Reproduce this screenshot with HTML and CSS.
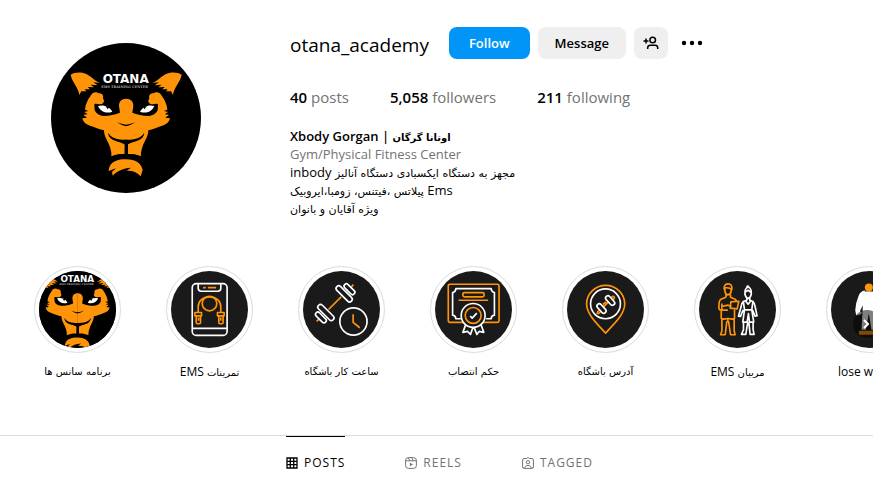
FILE: index.html
```html
<!DOCTYPE html>
<html lang="en">
<head>
<meta charset="utf-8">
<meta name="viewport" content="width=device-width, initial-scale=1">
<title>otana_academy</title>
<link rel="stylesheet" href="styles.css">
</head>
<body>
<svg class="defs" aria-hidden="true">
  <defs>
    <g id="ear"><path d="M92 119C103 111 124 111 137 116C155 124 160 135 180 144L160 142L173 151L152 149L162 157L143 156L150 163L134 163L139 169L124 169L118 180C116 158 96 142 92 119Z"/></g>
    <g id="half">
      <path d="M259 191C244 191 237 200 237 213L240 233C226 238 210 243 190 243C176 241 168 235 164 226L163 208C170 204 175 210 185 207C194 202 193 194 189 191C192 181 185 174 176 175C168 168 155 173 151 184C142 196 136 210 135 224L145 228L133 231L143 238L130 239L141 248L127 250C130 263 139 269 153 273C168 278 178 283 192 286C192 306 204 318 209 334C213 345 215 354 214 364C228 357 241 356 254 357L255 330C250 320 230 320 216 313C208 308 206 301 204 293C212 309 232 314 259 314Z"/>
      <path d="M254 314H259V322H254Z" fill="#000"/>
      <path d="M174 213C190 208 208 213 217 230C201 237 182 231 174 213Z" fill="#fff"/>
      <path d="M196 212L208 216L203 223Z" fill="#000"/>
    </g>
    <g id="tiger">
      <rect x="33" y="24" width="450" height="450" fill="#000"/>
      <g fill="#ff9408">
        <use href="#ear"/><use href="#ear" transform="matrix(-1 0 0 1 517 0)"/>
        <use href="#half"/><use href="#half" transform="matrix(-1 0 0 1 517 0)"/>
        <path d="M206 408C207 386 224 374 250 373C281 370 304 382 308 405L302 424C292 412 279 406 260 407L273 398C249 400 232 407 218 422L216 411L228 400C219 402 212 407 206 408Z"/>
      </g>
      <path d="M231 262Q246 272 258 274Q271 272 286 262Q271 268 258 269Q246 268 231 262Z" fill="#000"/>
      <path d="M205 294C213 313 239 317 258 317C278 317 304 313 312 294C309 319 281 318 264 328V356H254V328C236 318 208 319 205 294Z" fill="#000"/>
      <text x="257" y="144" class="logo-name">OTANA</text>
      <text x="254" y="159" class="logo-sub">EMS TRAINING CENTER</text>
    </g>
  </defs>
</svg>

<main>
  <header class="profile">
    <svg class="avatar" viewBox="33 24 450 450" role="img" aria-label="otana_academy"><use href="#tiger"/></svg>
    <section class="info">
      <div class="top">
        <h1>otana_academy</h1>
        <div class="actions">
          <button class="btn primary">Follow</button>
          <button class="btn">Message</button>
          <button class="btn square" aria-label="Similar accounts">
            <svg width="16" height="16" viewBox="0 0 16 16" fill="none" stroke="#000" stroke-width="1.5"><circle cx="9.700" cy="5" r="2.800"/><path d="M4.700 14v-1.200c0-1.600 1-2.600 2.600-2.600h4.800c1.600 0 2.600 1 2.600 2.600V14M.5 6h5M3 3.500v5"/></svg>
          </button>
          <button class="more" aria-label="Options"><svg width="22" height="6" viewBox="0 0 22 6"><circle cx="3" cy="3" r="2.200"/><circle cx="11" cy="3" r="2.200"/><circle cx="19" cy="3" r="2.200"/></svg></button>
        </div>
      </div>
      <ul class="stats">
        <li><b>40</b> posts</li>
        <li><b>5,058</b> followers</li>
        <li><b>211</b> following</li>
      </ul>
      <div class="bio">
        <p class="name">Xbody Gorgan | <span lang="fa">اوتانا گرگان</span></p>
        <p class="category">Gym/Physical Fitness Center</p>
        <p dir="rtl"><span lang="fa">مجهز به دستگاه ایکسبادی دستگاه آنالیز</span> inbody</p>
        <p dir="rtl">Ems <span lang="fa">پیلاتس ،فیتنس، زومبا،ایروبیک</span></p>
        <p dir="rtl"><span lang="fa">ویژه آقایان و بانوان</span></p>
      </div>
    </section>
  </header>

  <section class="carousel">
    <ul class="highlights">
      <li><a href="#"><svg viewBox="100 100 316 316"><use href="#tiger"/></svg><span dir="rtl" lang="fa">برنامه سانس ها</span></a></li>
      <li><a href="#"><svg viewBox="437 32 232 232" class="line">
        <g class="white"><rect x="501" y="70" width="105" height="156" rx="12"/><path d="M519 71v13q0 9 9 9h50q9 0 9-9V71M501 205h105"/></g>
        <g class="orange"><path d="M534 82h8m6 0h25"/><circle cx="553" cy="130" r="22"/><path d="M519 156v-16c0-18 14-30 34-30s34 12 34 30v16M509 157h20v10h-20zM577 157h20v10h-20zM513 167v20q0 4 4 4h5q4 0 4-4v-20M581 167v20q0 4 4 4h5q4 0 4-4v-20M520 172v10M587 172v10"/></g>
      </svg><span dir="rtl"><span lang="fa">تمرینات</span> EMS</span></a></li>
      <li><a href="#"><svg viewBox="38 32 232 232" class="line">
        <g class="orange"><path d="M115 148l38-38M182 82l8-9M79 184l8-8"/></g>
        <g class="white"><rect x="-31" y="-8" width="62" height="16" rx="8" transform="translate(162 101) rotate(45)"/><rect x="-20" y="-7" width="40" height="14" rx="7" transform="translate(178 87) rotate(45)"/><rect x="-31" y="-8" width="62" height="16" rx="8" transform="translate(107 157) rotate(45)"/><rect x="-20" y="-7" width="40" height="14" rx="7" transform="translate(92 172) rotate(45)"/><circle cx="190" cy="184" r="41"/></g>
        <path class="orange" d="M189 162v25l20 16"/>
      </svg><span dir="rtl" lang="fa">ساعت کار باشگاه</span></a></li>
      <li><a href="#"><svg viewBox="434 32 232 232" class="line">
        <rect class="orange" x="474" y="72" width="153" height="115" rx="5"/>
        <path class="white" d="M512 176h-15q-1-10-10-11V97q9-2 10-12h106q1 9 10 12v68q-9 1-10 11h-15"/>
        <g class="orange"><rect x="518" y="97" width="64" height="13" rx="5"/><path d="M505 120h89"/></g>
        <path class="white fill" d="M527 192l-9 25 14-3 9 9 9-26 10 26 7-9 14 3-9-25"/>
        <circle class="white fill" cx="549" cy="166" r="36"/>
        <circle class="orange" cx="549" cy="166" r="24"/><path class="white" d="M540 168l6 6 14-15"/>
      </svg><span dir="rtl" lang="fa">حکم انتصاب</span></a></li>
      <li><a href="#"><svg viewBox="50 32 232 232" class="line">
        <path class="orange" d="M166 219C137 187 109 161 109 131a57 55 0 0 1 115 0C224 161 196 187 166 219Z"/>
        <circle class="white" cx="166" cy="131" r="45"/>
        <path class="orange" d="M160 140l15-15M158 133l10-8M184 112q6-7 9 0 1 3-5 7M147 151q-6 3-6 8 6 3 9-4"/>
        <g class="white"><rect x="-17" y="-7" width="34" height="14" rx="7" transform="translate(180 121) rotate(48)"/><rect x="-17" y="-7" width="34" height="14" rx="7" transform="translate(154 145) rotate(48)"/></g>
      </svg><span dir="rtl" lang="fa">آدرس باشگاه</span></a></li>
      <li><a href="#"><svg viewBox="446 32 232 232" class="line">
        <g class="orange"><path d="M524 83v9q1 11 9 12 9-1 10-12v-9M522 89q-3-17 11-18 14-1 12 17-7-7-21-5M527 103v8l-15 6q-7 4-6 28 1 5 7 5h20M541 103v8l14 6 4 5M515 130v18M513 139l21-4 10 5M542 125l24-2-5 23-21-2zM513 150v25l8 2 12-2 13 2 7-2v-26M515 177v36l-4 11h14l5-41M552 177v36l3 11h-14l-6-41M533 175v10"/></g>
        <g class="white"><path d="M585 90q-3 20 9 25 12-5 9-25-4-9-9-9t-9 9ZM590 80q1-5 7-1M585 95l9-5 8 6M590 114v6l-11 4q-5 4-6 15l-8 29 6 1 8-20M599 114v6l10 4q4 4 6 15l6 28-6 1-8-19M580 126l3 23-5 37h13l4-26 3 26h13l-6-37 3-23M580 186v23l-6 14h13l6-37M609 186v23l3 14h-12l-4-37M582 149h24M587 123l7 9 7-9"/></g>
      </svg><span dir="rtl"><span lang="fa">مربیان</span> EMS</span></a></li>
      <li><a href="#"><svg viewBox="154 32 232 232">
        <circle cx="268" cy="82" r="12" fill="#ff9408"/>
        <path fill="#fff" d="M256 94h24q14 2 19 15l8 43-8 8-12-25 5 74h-16l-8-50-9 50h-13l4-74-9 18 6 4-3 5-14 4-3-16q2-25 10-43 5-14 19-16Z"/><path fill="#ff9408" d="M238 212h60v12h-60z"/>
      </svg><span>lose weight</span></a></li>
    </ul>
    <button class="next" aria-label="Next"><svg width="6" height="12" viewBox="0 0 6 12" fill="none" stroke="#fff" stroke-width="2"><path d="M1 2l4 4-4 4"/></svg></button>
  </section>

  <nav class="tabs">
    <a href="#" class="active"><svg width="12" height="12" viewBox="0 0 12 12" fill="none" stroke="currentColor" stroke-width="1.300"><path d="M1 1h10v10H1zM4.300 1v10M7.700 1v10M1 4.300h10M1 7.700h10"/></svg>POSTS</a>
    <a href="#"><svg width="12" height="12" viewBox="0 0 12 12" fill="none" stroke="currentColor" stroke-width="1"><rect x=".6" y=".6" width="10.800" height="10.800" rx="2.800"/><path d="M.6 3.800h10.800M3.300.8l1.600 3M6.700.8l1.600 3"/><path d="M4.900 5.700v3.600L8 7.500z" fill="currentColor" stroke="none"/></svg>REELS</a>
    <a href="#"><svg width="12" height="12" viewBox="0 0 12 12" fill="none" stroke="currentColor" stroke-width="1"><path d="M2 1.500h2.500L6 .5l1.500 1H10q1.400 0 1.400 1.400V10q0 1.400-1.400 1.400H2Q.6 11.400.6 10V2.900Q.6 1.500 2 1.500Z"/><circle cx="6" cy="5.200" r="1.700"/><path d="M2.800 11c0-3.400 6.400-3.400 6.400 0"/></svg>TAGGED</a>
  </nav>
</main>
</body>
</html>
```
FILE: styles.css
```css
* { box-sizing: border-box; }
body {
  margin: 0;
  background: #fff;
  color: #000;
  font: 14px/18px "Open Sans", "DejaVu Sans", sans-serif;
  overflow-x: hidden;
}
h1, p, ul { margin: 0; padding: 0; font-weight: 400; }
ul { list-style: none; }
a { color: inherit; text-decoration: none; }
button { border: 0; padding: 0; font: inherit; color: inherit; cursor: pointer; }
svg { display: block; flex: none; }
[lang="fa"] { font-family: "DejaVu Sans", sans-serif; font-size: 11px; }

.defs { position: absolute; width: 0; height: 0; }
.logo-name { font: 700 36px "DejaVu Sans", sans-serif; fill: #fff; text-anchor: middle; }
.logo-sub { font: 700 10px "DejaVu Serif", serif; fill: #aaa; text-anchor: middle; }

.profile { display: flex; gap: 89px; padding: 27px 24px 0 51px; }
.avatar { width: 150px; height: 150px; margin-top: 16px; border-radius: 50%; }
.info { flex: 1; min-width: 0; }
.top { display: flex; align-items: center; gap: 20px; height: 32px; }
h1 { padding-top: 4px; font-size: 19px; line-height: 32px; }
.actions { display: flex; align-items: center; gap: 8px; }
.btn {
  height: 32px;
  padding: 0 17px;
  border-radius: 8px;
  background: #efefef;
  font-size: 13px;
  font-weight: 600;
}
.primary { padding: 0 20px; background: #0095f6; color: #fff; }
.square { width: 34px; padding: 0 9px; }
.more { padding: 8px 5px; background: none; }

.stats { display: flex; gap: 41px; margin-top: 27px; font-size: 15px; line-height: 22px; color: #737373; }
.stats b { font-weight: 600; color: #000; }

.bio { margin-top: 19px; font-size: 13px; line-height: 18px; }
.bio p { height: 18px; text-align: left; }
.bio .name { font-weight: 600; }
.name [lang="fa"] { font-size: 10px; }
.category { color: #737373; }

.carousel { position: relative; overflow: hidden; margin-top: 49px; padding-left: 34px; }
.highlights { display: flex; gap: 45px; }
.highlights li { flex: none; width: 87px; }
.highlights a { display: flex; flex-direction: column; align-items: center; gap: 10px; }
.highlights svg {
  width: 87px;
  height: 87px;
  padding: 4px;
  border: 1px solid #dbdbdb;
  border-radius: 50%;
  background: #1a1a1a content-box;
  overflow: hidden;
}
.highlights a > span { font-size: 12px; line-height: 18px; white-space: nowrap; }
.highlights a > span[lang="fa"], .highlights [lang="fa"] { font-size: 10px; }
.line { fill: none; stroke-width: 5; stroke-linejoin: round; }
.white { stroke: #fff; }
.orange { stroke: #ff9408; }
.fill { fill: #1a1a1a; }
.next {
  position: absolute;
  top: 44px;
  right: -8px;
  width: 28px;
  height: 28px;
  padding-left: 10px;
  border-radius: 50%;
  background: rgba(0, 0, 0, 0.5);
}

.tabs {
  display: flex;
  justify-content: center;
  gap: 60px;
  margin-top: 53px;
  padding-left: 6px;
  border-top: 1px solid #dbdbdb;
  color: #737373;
  font-size: 12px;
  letter-spacing: 1px;
}
.tabs a { display: flex; align-items: center; gap: 6px; height: 52px; border-top: 1px solid transparent; }
.tabs .active { border-color: #000; color: #000; }
```
